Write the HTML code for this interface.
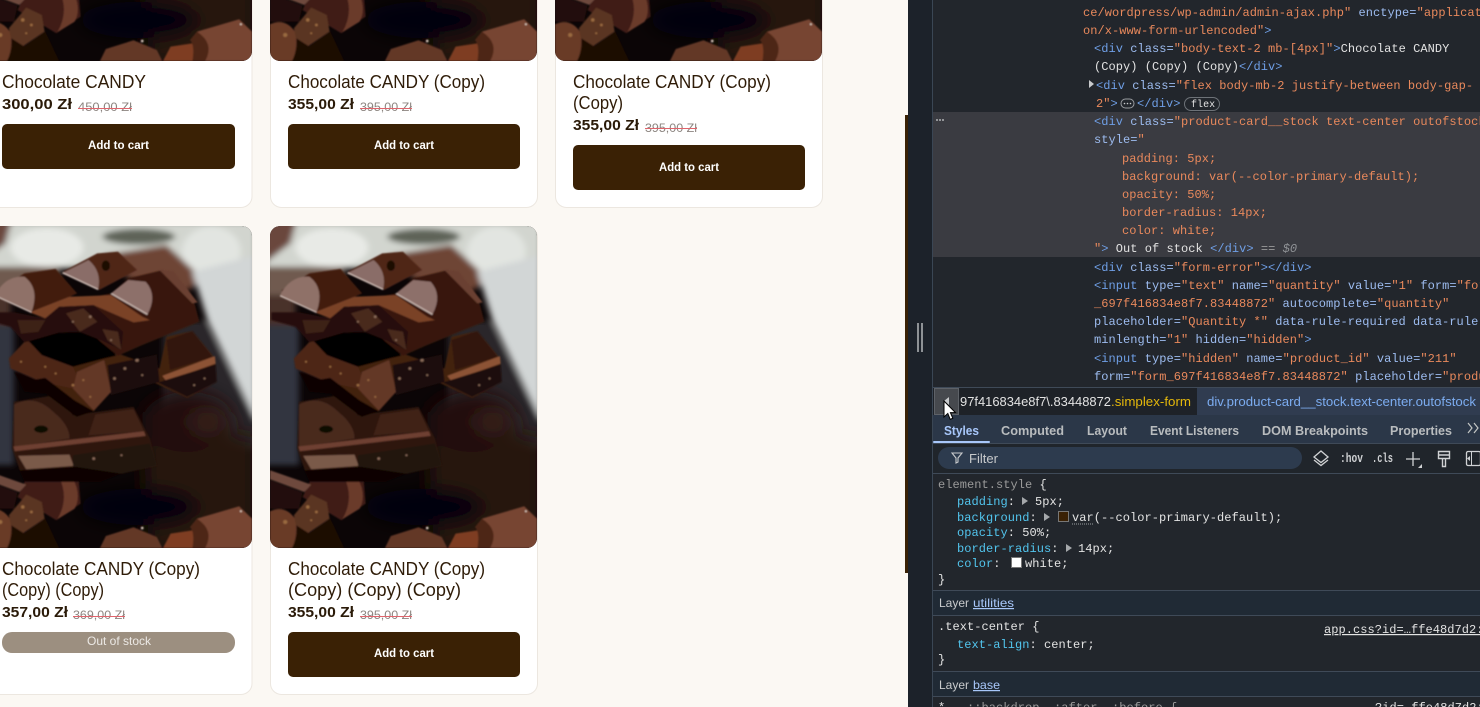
<!DOCTYPE html>
<html lang="en"><head><meta charset="utf-8"><title>Products</title>
<style>
html,body{margin:0;padding:0;width:1480px;height:707px;overflow:hidden;background:#fbf8f3}
svg{display:block}
text{white-space:pre}
.m{font-family:"Liberation Mono",monospace;font-size:12px;letter-spacing:.05px;fill:#e3e3e3}
.s{font-family:"Liberation Sans",sans-serif}
.t{fill:#6f9fe6}.a{fill:#9dbcf0}.v{fill:#e9895c}.w{fill:#e3e3e3}.g{fill:#8f9296;font-style:italic}
.p{fill:#52c5ee}.k{fill:#9a9a9a}
.ti{font-family:"Liberation Sans",sans-serif;font-size:18px;fill:#2f1c08}
.pr{font-family:"Liberation Sans",sans-serif;font-size:15px;font-weight:bold;fill:#2a1a08}
.ol{font-family:"Liberation Sans",sans-serif;font-size:12px;fill:#8c8580}
.bt{font-family:"Liberation Sans",sans-serif;font-size:12px;font-weight:bold;fill:#fff}
.tb{font-family:"Liberation Sans",sans-serif;font-size:12.5px;font-weight:bold;fill:#b9bcbe}
.ly{font-family:"Liberation Sans",sans-serif;font-size:12px;fill:#c8cacc}
</style></head><body>
<svg width="1480" height="707" viewBox="0 0 1480 707" xmlns="http://www.w3.org/2000/svg">
<defs>
<filter id="b" x="-5%" y="-5%" width="110%" height="110%"><feGaussianBlur stdDeviation="2.500"/></filter>
<filter id="bb" x="-10%" y="-10%" width="120%" height="120%"><feGaussianBlur stdDeviation="9"/></filter>
<filter id="bc" x="-30%" y="-30%" width="160%" height="160%"><feGaussianBlur stdDeviation="26"/></filter>
<clipPath id="cp"><rect x="786" y="3" width="771" height="965" rx="30" ry="30"/></clipPath>
<symbol id="choc" viewBox="786 3 771 965" preserveAspectRatio="none">
<g clip-path="url(#cp)">
<rect x="786" y="3" width="771" height="965" fill="#0b0506"/>
<g filter="url(#bb)">
<rect x="770" y="-10" width="800" height="140" fill="#d2d5cf"/>
<path d="M770 125H1000V210H770Z" fill="#6f5a50"/>
<path d="M770 -10H862L845 55 770 115Z" fill="#6a463c"/>
<ellipse cx="965" cy="68" rx="105" ry="58" fill="#e8eae6"/>
<ellipse cx="1440" cy="80" rx="85" ry="75" fill="#e2e5e1"/>
<ellipse cx="1230" cy="35" rx="105" ry="24" fill="#5f6359"/>
<path d="M1130 90 1310 60 1420 165 1340 215 1200 160Z" fill="#6e4534"/>
<path d="M1385 140 1570 90V590L1430 290Z" fill="#d2d6d6"/>
<path d="M1420 290 1570 590V670L1300 720V280Z" fill="#2c2629"/>
<path d="M770 210H860V300H770Z" fill="#4a3029"/>
<path d="M770 300H870V720H770Z" fill="#33363f"/>
</g>
<g filter="url(#bc)">
<path d="M1240 560 1570 640V980H1260Z" fill="#27120f"/>
<ellipse cx="1370" cy="590" rx="130" ry="90" fill="#240d0a"/>
<ellipse cx="1430" cy="590" rx="55" ry="32" fill="#38231f"/>
<ellipse cx="1230" cy="845" rx="170" ry="55" fill="#02030a"/>
</g>
<g filter="url(#b)">
<!-- lower left -->
<path d="M905 760 1055 745 1062 835 992 885 880 815Z" fill="#3f1b12"/>
<path d="M1000 755 1040 760Q1065 810 1045 850L995 882Q1030 820 1000 755Z" fill="#6a3a2c"/>
<path d="M786 735 905 778 885 800 786 762Z" fill="#6e4a3c"/>
<path d="M786 765 880 802 870 850 786 850Z" fill="#210c07"/>
<path d="M786 858Q830 838 858 880 870 925 850 968H786Z" fill="#693a26"/>
<path d="M855 870 905 808 950 830 958 880 880 935 862 905Z" fill="#5a3420"/>
<path d="M850 968Q868 930 862 900L900 925 960 880 1000 968Z" fill="#1e0b06"/>
<!-- bottom right pieces -->
<path d="M1118 968 1135 932 1215 906 1282 935 1298 968Z" fill="#633726"/>
<path d="M1300 968 1322 925 1392 914 1425 968Z" fill="#7e3e22"/>
<path d="M1395 968Q1425 900 1398 880L1520 843 1557 880V968Z" fill="#774432"/>
<path d="M1398 880Q1450 915 1422 968H1385Q1392 920 1378 905Z" fill="#4e2516"/>
<!-- third bar -->
<path d="M870 530 1000 508 1040 570 1215 545 1262 640 1282 722 1180 745 890 745 865 670Z" fill="#2f170f"/>
<path d="M870 538Q930 505 985 562 1030 600 1030 640L870 665Z" fill="#4a291e"/>
<path d="M1085 630 1105 568 1215 552 1245 618Z" fill="#3f2117"/>
<path d="M868 664 1245 618 1250 632 872 678Z" fill="#6e4032"/>
<path d="M882 692 1030 688 1042 722 905 732Z" fill="#7a5a4a"/>
<path d="M1040 690 1262 655 1282 720 1180 745 1040 735Z" fill="#24130d"/>
<path d="M885 735 1050 725 1180 745 1120 770 900 770Z" fill="#0c0504"/>
<ellipse cx="948" cy="612" rx="20" ry="11" fill="#0f0806"/>
<!-- second layer -->
<path d="M855 400 905 345 1030 425 1170 385 1290 430 1310 335 1385 318 1450 400 1455 470 1370 518 1270 470 1150 500 1100 558 950 470 860 430Z" fill="#42200f"/>
<path d="M855 400 905 345 1040 425 1050 450 1040 490 950 470 860 430Z" fill="#4d2717"/>
<path d="M1052 440 1130 405 1150 500 1100 556 1040 490Z" fill="#633728"/>
<path d="M1310 345 1385 318 1442 395 1320 435Z" fill="#331610"/>
<path d="M1298 452 1450 393 1452 415 1310 468Z" fill="#8c5236"/>
<path d="M1285 472 1452 418 1455 470 1370 515Z" fill="#1b0d09"/>
<path d="M1140 420 1282 388 1290 470 1150 510Z" fill="#1a0d09"/>
<path d="M890 470 960 458 1050 530 1100 558 1050 575 960 505Z" fill="#080302"/>
<path d="M870 440 900 500 1000 510 950 470Z" fill="#0a0403"/>
<!-- void -->
<path d="M905 340 960 325 1060 322 1120 345 1165 392 1130 400 1040 425 950 390Z" fill="#030101"/>
<!-- top chunk -->
<path d="M1170 80 1110 85 1010 140 1115 195 1225 135Z" fill="#4f2616"/>
<path d="M1008 145 1085 105Q1125 140 1112 195Z" fill="#8a6d67"/>
<path d="M820 195 900 145 990 132 1052 205 930 262 825 220Z" fill="#421c11"/>
<path d="M815 210Q845 150 900 155 945 190 920 262Z" fill="#8f7168"/>
<path d="M1150 205 1200 160 1300 135 1390 230 1405 290 1235 362 1170 392 1120 350 1000 235Z" fill="#38170e"/>
<path d="M1150 205 1200 165 1250 170Q1285 210 1255 268Z" fill="#8d706a"/>
<path d="M915 262 1030 215 1150 210 1240 275 1262 285 1215 292 1100 240 1000 245 960 280Z" fill="#7a4226"/>
<path d="M790 262 870 262 960 280 1000 245 1100 240 1185 320 1180 375 1120 345 1060 320 1000 322 900 352 860 305 790 285Z" fill="#26110a"/>
<path d="M1020 265 1070 250 1110 290 1060 320Z" fill="#48291b"/>
<path d="M880 285 960 285 940 320 890 325Z" fill="#3e2418"/>
<path d="M1125 312 1170 320 1180 375 1140 345Z" fill="#4a2a1b"/>
<path d="M815 212 920 262M1150 205 1255 268M1010 143 1112 193" stroke="#c9b7b0" stroke-width="4" fill="none"/>
<path d="M1290 135 1330 138 1400 232 1385 235Z" fill="#6a4030"/>
<ellipse cx="1135" cy="122" rx="12" ry="16" fill="#1f0c06"/>
<!-- speckles -->
<g fill="#9a6a40"><circle cx="960" cy="425" r="3"/><circle cx="990" cy="445" r="3"/><circle cx="1040" cy="480" r="4"/><circle cx="1070" cy="465" r="3"/><circle cx="1090" cy="515" r="3"/><circle cx="890" cy="410" r="3"/><circle cx="830" cy="890" r="6"/><circle cx="895" cy="845" r="5"/><circle cx="920" cy="860" r="4"/><circle cx="905" cy="885" r="3"/></g>
<g fill="#8a6a58"><circle cx="1190" cy="430" r="4"/><circle cx="1225" cy="405" r="5"/><circle cx="1160" cy="460" r="4"/><circle cx="1240" cy="450" r="3"/><circle cx="1390" cy="480" r="3"/><circle cx="1420" cy="460" r="3"/><circle cx="1090" cy="275" r="4"/><circle cx="1040" cy="290" r="3"/><circle cx="1150" cy="345" r="3"/><circle cx="1100" cy="700" r="4"/><circle cx="1180" cy="690" r="3"/></g>
<g fill="#d8c8bc"><circle cx="1525" cy="858" r="3"/><circle cx="1240" cy="908" r="4"/></g>
</g>
</g>
</symbol>
</defs>

<rect width="1480" height="707" fill="#fbf8f3"/>

<!-- cards -->
<g fill="#fff" stroke="#ece7e0">
<rect x="-30" y="-40" width="282" height="247.5" rx="11"/>
<rect x="270.5" y="-40" width="267" height="247.5" rx="11"/>
<rect x="555.5" y="-40" width="267" height="247.5" rx="11"/>
<rect x="-30" y="226.5" width="282" height="468" rx="11"/>
<rect x="270.5" y="226.5" width="267" height="468" rx="11"/>
</g>
<use href="#choc" x="-15" y="-261" width="267" height="322"/>
<use href="#choc" x="270" y="-261" width="267" height="322"/>
<use href="#choc" x="555" y="-261" width="267" height="322"/>
<use href="#choc" x="-15" y="226" width="267" height="322"/>
<use href="#choc" x="270" y="226" width="267" height="322"/>

<!-- card 1 -->
<text class="ti" x="2" y="88" textLength="144" lengthAdjust="spacingAndGlyphs">Chocolate CANDY</text>
<text class="pr" x="2" y="109" textLength="70" lengthAdjust="spacingAndGlyphs">300,00 Zł</text>
<text class="ol" x="78" y="111" textLength="54" lengthAdjust="spacingAndGlyphs">450,00 Zł</text>
<rect x="78" y="108" width="54" height="1" fill="#e0646c"/>
<rect x="2" y="124" width="233" height="45" rx="5" fill="#3a2105"/>
<text class="bt" x="88" y="149" textLength="61" lengthAdjust="spacingAndGlyphs">Add to cart</text>
<!-- card 2 -->
<text class="ti" x="288" y="88" textLength="197" lengthAdjust="spacingAndGlyphs">Chocolate CANDY (Copy)</text>
<text class="pr" x="288" y="109" textLength="66" lengthAdjust="spacingAndGlyphs">355,00 Zł</text>
<text class="ol" x="360" y="111" textLength="52" lengthAdjust="spacingAndGlyphs">395,00 Zł</text>
<rect x="360" y="108" width="52" height="1" fill="#e0646c"/>
<rect x="288" y="124" width="232" height="45" rx="5" fill="#3a2105"/>
<text class="bt" x="374" y="149" textLength="60" lengthAdjust="spacingAndGlyphs">Add to cart</text>
<!-- card 3 -->
<text class="ti" x="573" y="88" textLength="198" lengthAdjust="spacingAndGlyphs">Chocolate CANDY (Copy)</text>
<text class="ti" x="573" y="109" textLength="50" lengthAdjust="spacingAndGlyphs">(Copy)</text>
<text class="pr" x="573" y="130" textLength="66" lengthAdjust="spacingAndGlyphs">355,00 Zł</text>
<text class="ol" x="645" y="132" textLength="52" lengthAdjust="spacingAndGlyphs">395,00 Zł</text>
<rect x="645" y="128" width="52" height="1" fill="#e0646c"/>
<rect x="573" y="145" width="232" height="45" rx="5" fill="#3a2105"/>
<text class="bt" x="659" y="171" textLength="60" lengthAdjust="spacingAndGlyphs">Add to cart</text>
<!-- card 4 -->
<text class="ti" x="2" y="575" textLength="198" lengthAdjust="spacingAndGlyphs">Chocolate CANDY (Copy)</text>
<text class="ti" x="2" y="596" textLength="102" lengthAdjust="spacingAndGlyphs">(Copy) (Copy)</text>
<text class="pr" x="2" y="617" textLength="66" lengthAdjust="spacingAndGlyphs">357,00 Zł</text>
<text class="ol" x="73" y="619" textLength="52" lengthAdjust="spacingAndGlyphs">369,00 Zł</text>
<rect x="73" y="616" width="52" height="1" fill="#e0646c"/>
<rect x="2" y="632" width="233" height="21" rx="10" fill="#9c8f80"/>
<text class="bt" style="font-weight:normal;fill:#ece9e5" x="87" y="645" textLength="64" lengthAdjust="spacingAndGlyphs">Out of stock</text>
<!-- card 5 -->
<text class="ti" x="288" y="575" textLength="197" lengthAdjust="spacingAndGlyphs">Chocolate CANDY (Copy)</text>
<text class="ti" x="288" y="596" textLength="173" lengthAdjust="spacingAndGlyphs">(Copy) (Copy) (Copy)</text>
<text class="pr" x="288" y="617" textLength="66" lengthAdjust="spacingAndGlyphs">355,00 Zł</text>
<text class="ol" x="360" y="619" textLength="52" lengthAdjust="spacingAndGlyphs">395,00 Zł</text>
<rect x="360" y="616" width="52" height="1" fill="#e0646c"/>
<rect x="288" y="632" width="232" height="45" rx="5" fill="#3a2105"/>
<text class="bt" x="374" y="657" textLength="60" lengthAdjust="spacingAndGlyphs">Add to cart</text>

<!-- devtools -->
<rect x="905" y="115" width="3" height="458" fill="#3a2205"/>
<rect x="908" y="0" width="572" height="707" fill="#1e2329"/>
<rect x="908" y="0" width="25" height="707" fill="#1c222a"/>
<rect x="933" y="0" width="547" height="388" fill="#22262c"/>
<rect x="932" y="0" width="1" height="707" fill="#3a4654"/>
<rect x="917" y="323" width="2" height="29" fill="#8e9296"/>
<rect x="921" y="323" width="2" height="29" fill="#8e9296"/>
<rect x="933" y="112" width="547" height="145" fill="#3a3b41"/>
<g fill="#aeb0b3"><circle cx="937" cy="120" r="1"/><circle cx="940" cy="120" r="1"/><circle cx="943" cy="120" r="1"/></g>

<text class="m" x="1083" y="16"><tspan class="v">ce/wordpress/wp-admin/admin-ajax.php"</tspan><tspan class="a"> enctype=</tspan><tspan class="v">"applicat</tspan></text>
<text class="m" x="1083" y="34"><tspan class="v">on/x-www-form-urlencoded"</tspan><tspan class="t">&gt;</tspan></text>
<text class="m" x="1094" y="52"><tspan class="t">&lt;div</tspan><tspan class="a"> class=</tspan><tspan class="v">"body-text-2 mb-[4px]"</tspan><tspan class="t">&gt;</tspan><tspan class="w">Chocolate CANDY</tspan></text>
<text class="m" x="1094" y="70"><tspan class="w">(Copy) (Copy) (Copy)</tspan><tspan class="t">&lt;/div&gt;</tspan></text>
<path d="M1089 80l5 4-5 4z" fill="#c8cacc"/>
<text class="m" x="1096" y="89"><tspan class="t">&lt;div</tspan><tspan class="a"> class=</tspan><tspan class="v">"flex body-mb-2 justify-between body-gap-</tspan></text>
<text class="m" x="1096" y="107"><tspan class="v">2"</tspan><tspan class="t">&gt;</tspan></text>
<rect x="1121" y="99" width="13" height="9" rx="4.5" fill="none" stroke="#9a9da1"/>
<g fill="#c8cacc"><circle cx="1124.5" cy="103.5" r=".8"/><circle cx="1127.5" cy="103.5" r=".8"/><circle cx="1130.5" cy="103.5" r=".8"/></g>
<text class="m" x="1137" y="107"><tspan class="t">&lt;/div&gt;</tspan></text>
<rect x="1184.5" y="97.5" width="35" height="13" rx="6.5" fill="none" stroke="#6d7278"/>
<text class="m" style="font-size:10px" x="1191" y="107" fill="#c8cacc">flex</text>
<text class="m" x="1094" y="125"><tspan class="t">&lt;div</tspan><tspan class="a"> class=</tspan><tspan class="v">"product-card__stock text-center outofstock"</tspan></text>
<text class="m" x="1094" y="143"><tspan class="a">style=</tspan><tspan class="v">"</tspan></text>
<text class="m v" x="1122" y="162">padding: 5px;</text>
<text class="m v" x="1122" y="180">background: var(--color-primary-default);</text>
<text class="m v" x="1122" y="198">opacity: 50%;</text>
<text class="m v" x="1122" y="216">border-radius: 14px;</text>
<text class="m v" x="1122" y="234">color: white;</text>
<text class="m" x="1094" y="252"><tspan class="v">"</tspan><tspan class="t">&gt;</tspan><tspan class="w"> Out of stock </tspan><tspan class="t">&lt;/div&gt;</tspan><tspan class="k"> == </tspan><tspan class="g">$0</tspan></text>
<text class="m" x="1094" y="271"><tspan class="t">&lt;div</tspan><tspan class="a"> class=</tspan><tspan class="v">"form-error"</tspan><tspan class="t">&gt;&lt;/div&gt;</tspan></text>
<text class="m" x="1094" y="289"><tspan class="t">&lt;input</tspan><tspan class="a"> type=</tspan><tspan class="v">"text"</tspan><tspan class="a"> name=</tspan><tspan class="v">"quantity"</tspan><tspan class="a"> value=</tspan><tspan class="v">"1"</tspan><tspan class="a"> form=</tspan><tspan class="v">"form</tspan></text>
<text class="m" x="1094" y="307"><tspan class="v">_697f416834e8f7.83448872"</tspan><tspan class="a"> autocomplete=</tspan><tspan class="v">"quantity"</tspan></text>
<text class="m" x="1094" y="325"><tspan class="a">placeholder=</tspan><tspan class="v">"Quantity *"</tspan><tspan class="a"> data-rule-required data-rule-</tspan></text>
<text class="m" x="1094" y="343"><tspan class="a">minlength=</tspan><tspan class="v">"1"</tspan><tspan class="a"> hidden=</tspan><tspan class="v">"hidden"</tspan><tspan class="t">&gt;</tspan></text>
<text class="m" x="1094" y="362"><tspan class="t">&lt;input</tspan><tspan class="a"> type=</tspan><tspan class="v">"hidden"</tspan><tspan class="a"> name=</tspan><tspan class="v">"product_id"</tspan><tspan class="a"> value=</tspan><tspan class="v">"211"</tspan></text>
<text class="m" x="1094" y="380"><tspan class="a">form=</tspan><tspan class="v">"form_697f416834e8f7.83448872"</tspan><tspan class="a"> placeholder=</tspan><tspan class="v">"product</tspan></text>

<!-- breadcrumb -->
<rect x="933" y="387" width="547" height="1" fill="#3f4a58"/>
<rect x="933" y="388" width="264" height="27" fill="#1e2228"/>
<rect x="1197" y="388" width="283" height="27" fill="#303c50"/>
<rect x="934.5" y="388.5" width="24" height="26" fill="#46494e" stroke="#5e6268"/>
<path d="M949 397v8l-5-4z" fill="#c8cacc"/>
<text class="s" style="font-size:13px" x="960" y="406" fill="#e3e3e3" textLength="151" lengthAdjust="spacingAndGlyphs">97f416834e8f7\.83448872</text>
<text class="s" style="font-size:13px" x="1111" y="406" fill="#e5b80b" textLength="80" lengthAdjust="spacingAndGlyphs">.simplex-form</text>
<text class="s" style="font-size:13px" x="1207" y="406" fill="#7cacf0" textLength="269" lengthAdjust="spacingAndGlyphs">div.product-card__stock.text-center.outofstock</text>

<!-- tabs -->
<rect x="933" y="415" width="547" height="28" fill="#2b3748"/>
<rect x="933" y="443" width="547" height="1" fill="#3f4a58"/>
<rect x="933" y="441" width="57" height="2" rx="1" fill="#a8c7fa"/>
<text class="tb" style="fill:#a8c7fa" x="944" y="435" textLength="35" lengthAdjust="spacingAndGlyphs">Styles</text>
<text class="tb" x="1001" y="435" textLength="63" lengthAdjust="spacingAndGlyphs">Computed</text>
<text class="tb" x="1087" y="435" textLength="40" lengthAdjust="spacingAndGlyphs">Layout</text>
<text class="tb" x="1150" y="435" textLength="89" lengthAdjust="spacingAndGlyphs">Event Listeners</text>
<text class="tb" x="1262" y="435" textLength="106" lengthAdjust="spacingAndGlyphs">DOM Breakpoints</text>
<text class="tb" x="1390" y="435" textLength="62" lengthAdjust="spacingAndGlyphs">Properties</text>
<path d="M1468 423l4 5-4 5M1474 423l4 5-4 5" fill="none" stroke="#c4c7c5" stroke-width="1.2"/>

<!-- filter row -->
<rect x="933" y="444" width="547" height="29" fill="#20252b"/>
<rect x="938" y="447" width="364" height="22" rx="11" fill="#2d3b4e"/>
<path d="M952 453h10l-4 5v4l-2 1v-5z" fill="none" stroke="#c8cacc" stroke-width="1.1"/>
<text class="s" style="font-size:12.5px" x="969" y="463" fill="#c8cacc" textLength="29" lengthAdjust="spacingAndGlyphs">Filter</text>
<path d="M1321 451l7 6-7 5.500-7-5.500zM1314 460l7 5.500 7-5.500" fill="none" stroke="#d0d2d4" stroke-width="1.3"/>
<text class="m" style="font-size:12.5px;font-weight:bold;fill:#d0d2d4" x="1340" y="462" textLength="23" lengthAdjust="spacingAndGlyphs">:hov</text>
<text class="m" style="font-size:12.5px;font-weight:bold;fill:#d0d2d4" x="1372" y="462" textLength="21" lengthAdjust="spacingAndGlyphs">.cls</text>
<path d="M1413 452v14M1406 459h14" stroke="#d0d2d4" stroke-width="1.3"/>
<path d="M1422 464v4h-4z" fill="#d0d2d4"/>
<path d="M1438.500 451.500h11v7h-11zM1438.500 455h11M1442.500 458.500h3v8h-3z" fill="none" stroke="#d0d2d4" stroke-width="1.4"/>
<rect x="1466.500" y="451.500" width="14" height="14" rx="1.500" fill="none" stroke="#d0d2d4" stroke-width="1.3"/>
<path d="M1471.500 452v13" stroke="#d0d2d4"/><path d="M1470 456v5l-3-2.500z" fill="#d0d2d4"/>
<rect x="933" y="473" width="547" height="1" fill="#3f4a58"/>

<!-- styles -->
<rect x="933" y="474" width="547" height="233" fill="#22262c"/>
<text class="m" x="938" y="488"><tspan class="k">element.style</tspan><tspan class="w"> {</tspan></text>
<text class="m" x="957" y="505"><tspan class="p">padding</tspan><tspan class="w">:</tspan></text>
<path d="M1022 497l6 4-6 4z" fill="#a5a8ab"/>
<text class="m w" x="1035" y="505">5px;</text>
<text class="m" x="957" y="521"><tspan class="p">background</tspan><tspan class="w">:</tspan></text>
<path d="M1044 513l6 4-6 4z" fill="#a5a8ab"/>
<rect x="1058.500" y="511.500" width="10" height="10" fill="#3a2105" stroke="#777"/>
<text class="m w" x="1072" y="521">var(--color-primary-default);</text>
<path d="M1072 524h22" stroke="#9a9da1" stroke-dasharray="1 1"/>
<text class="m" x="957" y="536"><tspan class="p">opacity</tspan><tspan class="w">: 50%;</tspan></text>
<text class="m" x="957" y="552"><tspan class="p">border-radius</tspan><tspan class="w">:</tspan></text>
<path d="M1066 544l6 4-6 4z" fill="#a5a8ab"/>
<text class="m w" x="1078" y="552">14px;</text>
<text class="m" x="957" y="567"><tspan class="p">color</tspan><tspan class="w">:</tspan></text>
<rect x="1011.500" y="557.500" width="10" height="10" fill="#fff" stroke="#777"/>
<text class="m w" x="1025" y="567">white;</text>
<text class="m w" x="938" y="583">}</text>

<rect x="933" y="590" width="547" height="1" fill="#3f4a58"/>
<rect x="933" y="591" width="547" height="24" fill="#202a35"/>
<text class="ly" x="939" y="607" textLength="30" lengthAdjust="spacingAndGlyphs">Layer</text>
<text class="ly" x="973" y="607" text-decoration="underline" style="fill:#a8c7fa" textLength="41" lengthAdjust="spacingAndGlyphs">utilities</text>
<rect x="933" y="615" width="547" height="1" fill="#3f4a58"/>
<text class="m" x="938" y="630"><tspan class="w">.text-center {</tspan></text>
<text class="m" x="957" y="648"><tspan class="p">text-align</tspan><tspan class="w">: center;</tspan></text>
<text class="m w" x="938" y="663">}</text>
<text class="m w" x="1324" y="633" text-decoration="underline">app.css?id=…ffe48d7d2:</text>

<rect x="933" y="671" width="547" height="1" fill="#3f4a58"/>
<rect x="933" y="672" width="547" height="24" fill="#202a35"/>
<text class="ly" x="939" y="689" textLength="30" lengthAdjust="spacingAndGlyphs">Layer</text>
<text class="ly" x="973" y="689" text-decoration="underline" style="fill:#a8c7fa" textLength="27" lengthAdjust="spacingAndGlyphs">base</text>
<rect x="933" y="696" width="547" height="1" fill="#3f4a58"/>
<text class="m" x="938" y="711"><tspan class="w">*</tspan><tspan class="k"> , ::backdrop, :after, :before {</tspan></text>
<text class="m w" x="1375" y="711">?id=…ffe48d7d2:</text>

<!-- cursor -->
<path d="M944 401v16l3.800-3.500 2.400 5.800 2.600-1.100-2.400-5.600h5.100z" fill="#fff" stroke="#000" stroke-width="1"/>
</svg>
</body></html>
